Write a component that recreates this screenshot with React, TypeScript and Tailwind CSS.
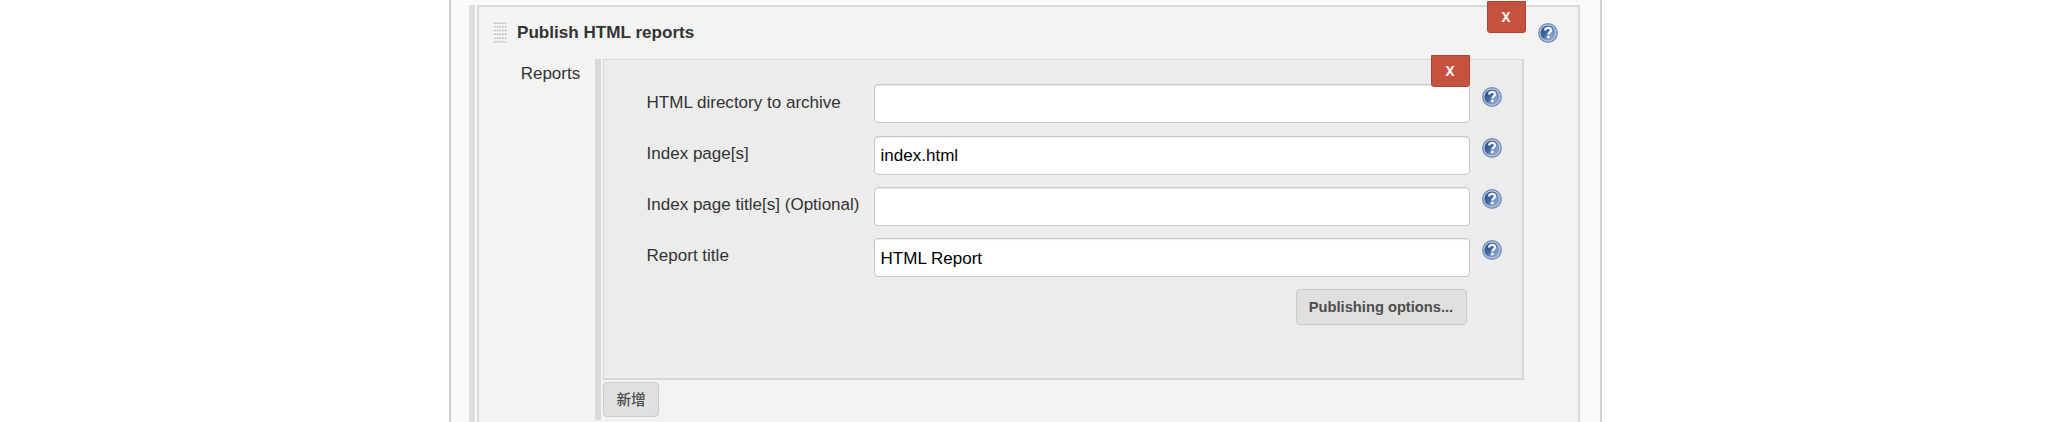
import React from "react";

function HelpIcon() {
  return (
    <svg viewBox="0 0 20 20" className="block size-5 shrink-0" role="img" aria-label="Help">
      <defs>
        <linearGradient id="helpFill" x1="0" y1="0.1" x2="1" y2="0.9">
          <stop offset="0" stopColor="#2a508c" />
          <stop offset="0.45" stopColor="#4168a3" />
          <stop offset="0.6" stopColor="#7893bf" />
          <stop offset="1" stopColor="#93aacd" />
        </linearGradient>
      </defs>
      <circle cx="10" cy="10" r="9.2" fill="#c6d2e6" stroke="#7690ba" strokeWidth="1.5" />
      <circle cx="10" cy="10" r="7.6" fill="url(#helpFill)" />
      <path
        d="M7 7.5C7.2 5.6 8.5 4.9 10.1 4.9c1.8 0 2.9 1 2.9 2.4 0 2-2.7 2.1-2.7 4.2"
        fill="none"
        stroke="#f6f8fb"
        strokeWidth="2.2"
      />
      <rect x="9" y="12.7" width="2.6" height="2.5" rx="0.6" fill="#f6f8fb" />
    </svg>
  );
}

function DragHandle() {
  return (
    <svg viewBox="0 0 14 23" className="block h-[23px] w-[14px] shrink-0">
      <defs>
        <pattern id="grip" width="2.7" height="3.75" patternUnits="userSpaceOnUse">
          <rect x="0.7" y="1.1" width="1.9" height="2" rx="0.5" fill="#b9b9b9" />
        </pattern>
      </defs>
      <rect width="14" height="23" fill="#fbfbfb" />
      <rect width="14" height="23" fill="url(#grip)" />
    </svg>
  );
}

function DeleteButton() {
  return (
    <button className="flex h-8 w-[39px] items-center justify-center rounded-b-[3px] border border-[#ae4336] bg-[#c5523f] pb-px font-['Noto_Sans',sans-serif] text-[15px] font-bold text-[#f5f0ef]">
      <span className="scale-x-90">X</span>
    </button>
  );
}

const fields = [
  { label: "HTML directory to archive", value: "", input: "pt-[3px]" },
  { label: "Index page[s]", value: "index.html", input: "mt-px pt-px" },
  { label: "Index page title[s] (Optional)", value: "", input: "mt-px pt-[3px]" },
  { label: "Report title", value: "HTML Report", input: "mt-px pt-[3px]" },
];

export default function App() {
  return (
    <div className="flex h-[422px] w-[2048px] overflow-hidden bg-white pl-[449px] font-['Liberation_Sans',Arial,sans-serif] text-[17px] text-[#333]">
      <div className="flex w-[1153px] border-x-2 border-l-[#cfcfcf] border-r-[#cfcfcf] bg-[#fafafa] pt-[5px] pl-[18px]">
        <div className="w-[6px] bg-[#dedede]" />
        <div className="relative ml-[2px] flex w-[1103px] flex-col border-2 border-b-0 border-[#dadada] bg-[#f3f3f3]">
          <div className="absolute -top-[6px] right-[52px]">
            <DeleteButton />
          </div>
          <div className="flex h-[52px] pl-[14px]">
            <div className="pt-[14px]">
              <DragHandle />
            </div>
            <h2 className="ml-[10px] pt-[15px] text-[17.1px] leading-[22px] font-bold">Publish HTML reports</h2>
            <div className="mr-[20px] ml-auto pt-[16px]">
              <HelpIcon />
            </div>
          </div>
          <div className="flex">
            <div className="w-[116px] pt-[4px] pl-[41.7px] leading-[22px]">Reports</div>
            <div className="h-[361px] w-[6px] bg-[#d9d9d9]" />
            <div className="ml-[2px]">
              <div className="relative h-[321px] w-[921px] border border-r-2 border-b-2 border-[#d6d6d6] bg-[#ececec] pt-6 pl-[42px]">
                <div className="absolute -top-[5px] right-[52px]">
                  <DeleteButton />
                </div>
                {fields.map((f) => (
                  <div key={f.label} className="flex h-[51px] items-start">
                    <label className="w-[228px] pt-[8px] pl-[0.5px] text-[17.05px] leading-[22px] whitespace-nowrap">{f.label}</label>
                    <input
                      defaultValue={f.value}
                      className={`h-[39px] w-[596px] rounded-[4px] border border-[#c8c8c8] bg-white px-[5.5px] text-[17.05px] text-black shadow-[inset_0_1px_1px_rgba(0,0,0,0.09)] ${f.input}`}
                    />
                    <div className="ml-[12px] pt-[3px]">
                      <HelpIcon />
                    </div>
                  </div>
                ))}
                <div className="flex w-[820.5px] justify-end pt-px">
                  <button className="h-9 w-[171px] rounded-[4px] border border-[#cacaca] bg-[#e0e0e0] text-[14.7px] font-bold text-[#4d4d4d]">
                    Publishing options...
                  </button>
                </div>
              </div>
              <button className="mt-[2px] block h-[35px] w-[56px] rounded-[4px] border border-[#cacaca] bg-[#e0e0e0] pb-px font-['Noto_Sans_CJK_SC',sans-serif] text-[14.6px] leading-[30px] font-medium text-[#4d4d4d]">
                新增
              </button>
            </div>
          </div>
        </div>
      </div>
    </div>
  );
}
